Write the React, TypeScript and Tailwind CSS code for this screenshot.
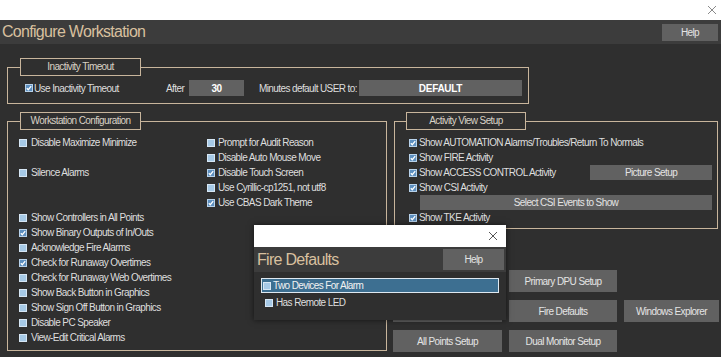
import React from "react";

const FONT = "font-['Liberation_Sans',Arial,sans-serif]";

function Box({ checked = false }: { checked?: boolean }) {
  return (
    <svg width="8" height="8" viewBox="0 0 8 8" className="shrink-0">
      <rect x="0.5" y="0.5" width="7" height="7" fill={checked ? "#5d8fbf" : "#a6c9e6"} stroke={checked ? "#b8d2ea" : "#d6e6f4"} />
      {checked && <path d="M1.8 4.2 L3.3 5.7 L6.2 2.2" stroke="#ffffff" strokeWidth="1.3" fill="none" />}
    </svg>
  );
}

function Check({ label, checked = false, gap = "gap-[4px]" }: { label: string; checked?: boolean; gap?: string }) {
  return (
    <div className={`flex h-[15px] items-center whitespace-nowrap ${gap}`}>
      <Box checked={checked} />
      <span>{label}</span>
    </div>
  );
}

function Close({ color = "#8a8a8a" }: { color?: string }) {
  return (
    <svg width="10" height="10" viewBox="0 0 10 10">
      <path d="M1 1 L9 9 M9 1 L1 9" stroke={color} strokeWidth="1" />
    </svg>
  );
}

// legend position in Chrome follows its own text-align, so the centring goes on an inner block
function Legend({ title, width, ml }: { title: string; width: string; ml: string }) {
  return (
    <legend className={`${ml} ${width} h-[18px] border border-[#c8b59c] bg-[#2f2f2f] text-left`}>
      <div className="text-center leading-[16px] text-[#d9d2c6]">{title}</div>
    </legend>
  );
}

const col1: (null | { label: string; checked?: boolean })[] = [
  { label: "Disable Maximize Minimize" },
  null,
  { label: "Silence Alarms" },
  null,
  null,
  { label: "Show Controllers in All Points" },
  { label: "Show Binary Outputs of In/Outs", checked: true },
  { label: "Acknowledge Fire Alarms" },
  { label: "Check for Runaway Overtimes", checked: true },
  { label: "Check for Runaway Web Overtimes" },
  { label: "Show Back Button in Graphics" },
  { label: "Show Sign Off Button in Graphics" },
  { label: "Disable PC Speaker" },
  { label: "View-Edit Critical Alarms" },
];

const col2 = [
  { label: "Prompt for Audit Reason" },
  { label: "Disable Auto Mouse Move" },
  { label: "Disable Touch Screen", checked: true },
  { label: "Use Cyrillic-cp1251, not utf8" },
  { label: "Use CBAS Dark Theme", checked: true },
];

const btn = "flex items-center justify-center bg-[#616161] text-[#e4e4e4]";

export default function App() {
  return (
    <div className={`relative h-[357px] w-[721px] overflow-hidden bg-[#2f2f2f] ${FONT} text-[10px] tracking-[-0.6px] text-[#dedede]`}>
      {/* window chrome */}
      <div className="flex h-[20px] items-center justify-end bg-white pr-[4px]">
        <Close />
      </div>
      <div className="flex h-[24px] items-center justify-between bg-[#3c3c3c] pl-[2px] pr-[3px]">
        <h1 className="text-[16px] tracking-[-0.7px] text-[#d8c09f]">Configure Workstation</h1>
        <div className={`${btn} h-[17px] w-[56px]`}>Help</div>
      </div>

      <div className="pl-[7px] pt-[14px]">
        {/* Inactivity Timeout */}
        <fieldset className="w-[522px] border border-[#c8b59c]">
          <Legend title="Inactivity Timeout" width="w-[121px]" ml="ml-[12px]" />
          <div className="flex h-[27px] items-center pb-[3px] pl-[17px]">
            <div className="w-[141px]">
              <Check label="Use Inactivity Timeout" checked gap="gap-[1px]" />
            </div>
            <span className="w-[23px]">After</span>
            <div className="flex h-[16px] w-[55px] items-center justify-center bg-[#616161] font-bold text-white">30</div>
            <span className="ml-[15px] w-[100px]">Minutes default USER to:</span>
            <div className="flex h-[16px] w-[163px] items-center justify-center bg-[#616161] font-bold tracking-[-0.3px] text-white">DEFAULT</div>
          </div>
        </fieldset>

        <div className="mt-[8px] flex gap-[7px]">
          {/* Workstation Configuration */}
          <fieldset className="h-[239px] w-[380px] border border-[#c8b59c]">
            <Legend title="Workstation Configuration" width="w-[121px]" ml="ml-[12px]" />
            <div className="flex pl-[11px] pt-[5px]">
              <div className="w-[188px]">
                {col1.map((c, i) => (c ? <Check key={i} label={c.label} checked={c.checked} /> : <div key={i} className="h-[15px]" />))}
              </div>
              <div>
                {col2.map((c) => (
                  <Check key={c.label} label={c.label} checked={c.checked} gap="gap-[3px]" />
                ))}
              </div>
            </div>
          </fieldset>

          <div className="flex flex-col">
            {/* Activity View Setup */}
            <fieldset className="w-[324px] border border-[#c8b59c]">
              <Legend title="Activity View Setup" width="w-[120px]" ml="ml-[11px]" />
              <div className="pb-[3px] pl-[14px] pr-[5px] pt-[5px]">
                <Check label="Show AUTOMATION Alarms/Troubles/Return To Normals" checked gap="gap-[2px]" />
                <Check label="Show FIRE Activity" checked gap="gap-[2px]" />
                <div className="flex items-center justify-between">
                  <Check label="Show ACCESS CONTROL Activity" checked gap="gap-[2px]" />
                  <div className={`${btn} h-[15px] w-[122px]`}>Picture Setup</div>
                </div>
                <Check label="Show CSI Activity" checked gap="gap-[2px]" />
                <div className={`${btn} ml-[11px] h-[15px]`}>Select CSI Events to Show</div>
                <Check label="Show TKE Activity" checked gap="gap-[2px]" />
              </div>
            </fieldset>

            <div className="-ml-[1px] mt-[41px] grid grid-cols-[109px_108px_95px] grid-rows-[22px_22px_22px] gap-x-[7px] gap-y-[8px]">
              <div className={btn} />
              <div className={btn}>Primary DPU Setup</div>
              <div />
              <div className={btn} />
              <div className={btn}>Fire Defaults</div>
              <div className={btn}>Windows Explorer</div>
              <div className={btn}>All Points Setup</div>
              <div className={btn}>Dual Monitor Setup</div>
            </div>
          </div>
        </div>
      </div>

      {/* Fire Defaults dialog */}
      <div className="absolute left-[254px] top-[225px] w-[252px] shadow-[0_0_6px_rgba(0,0,0,0.6)]">
        <div className="flex h-[22px] items-center justify-end bg-white pr-[8px]">
          <Close color="#555555" />
        </div>
        <div className="flex h-[25px] items-center justify-between bg-[#3c3c3c] pl-[3px] pr-[2px]">
          <h2 className="text-[16px] tracking-[-0.7px] text-[#d8c09f]">Fire Defaults</h2>
          <div className={`${btn} h-[21px] w-[61px]`}>Help</div>
        </div>
        <div className="h-[48px] bg-[#2f2f2f] pt-[6px]">
          <div className="ml-[7px] flex h-[15px] w-[238px] items-center gap-[2px] border border-[#dfe9f1] bg-[#3d6f91] pl-[1px] text-[#f2f2f2]">
            <Box />
            <span>Two Devices For Alarm</span>
          </div>
          <div className="flex h-[19px] items-center gap-[3px] pl-[11px]">
            <Box />
            <span>Has Remote LED</span>
          </div>
        </div>
      </div>
    </div>
  );
}
